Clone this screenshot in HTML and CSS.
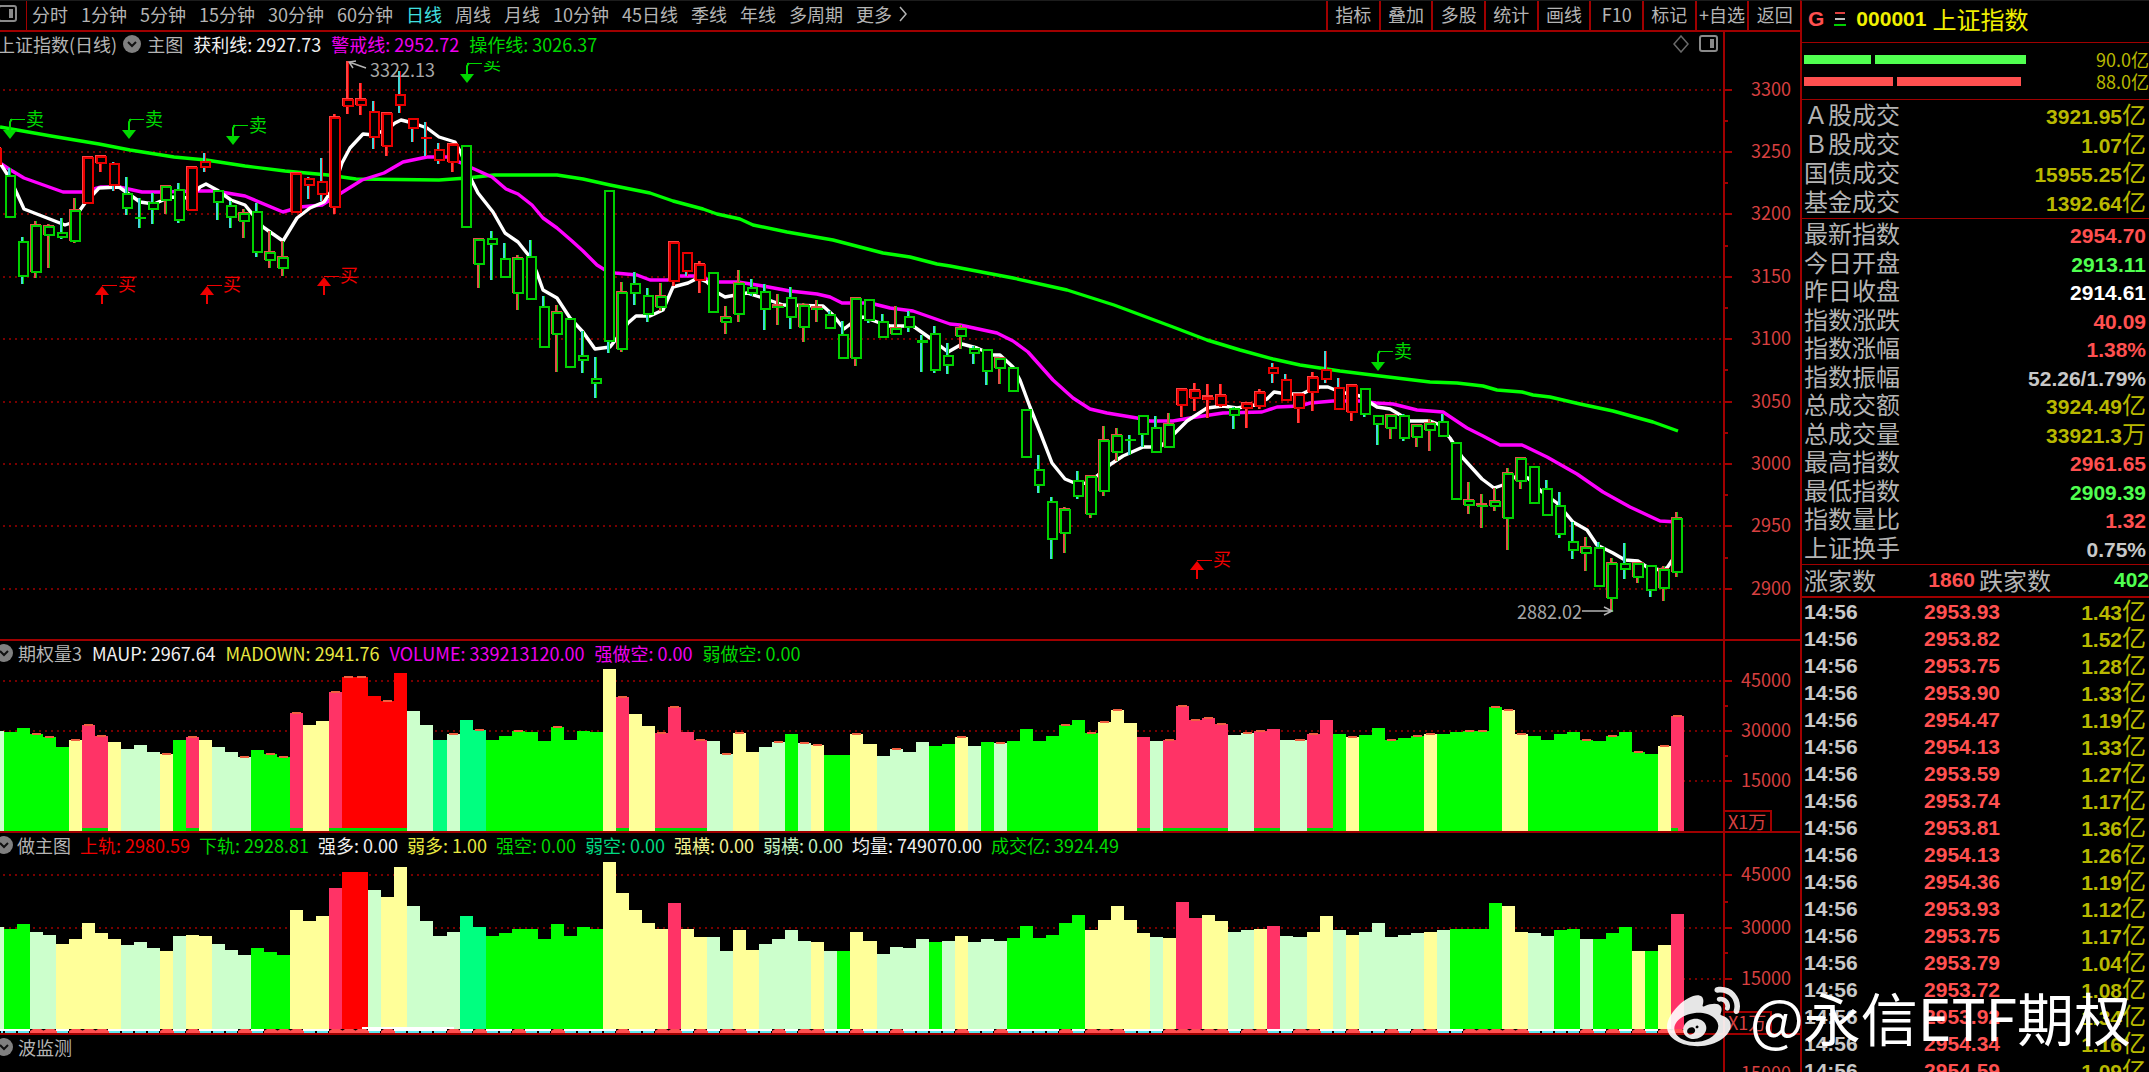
FILE: index.html
```html
<!DOCTYPE html>
<html lang="zh-CN">
<head>
<meta charset="utf-8">
<title>上证指数</title>
<link rel="stylesheet" href="styles.css">
</head>
<body>
<svg class="defs" aria-hidden="true">
  <symbol id="chevron" viewBox="0 0 18 18"><circle cx="9" cy="9" r="9" fill="#808080"/><path d="M5 7l4 4 4-4" fill="none" stroke="#111" stroke-width="2"/></symbol>
  <symbol id="split" viewBox="0 0 20 18"><rect x="1" y="1" width="17" height="15" rx="2" fill="none" stroke="#8a8a8a" stroke-width="2"/><rect x="11" y="4" width="4" height="9" fill="#8a8a8a"/></symbol>
</svg>
<div class="app">
  <main class="charts">
    <header class="toolbar">
      <button class="side-toggle" aria-label="侧栏"><svg class="ico-split"><use href="#split"/></svg></button>
      <nav class="periods">
        <button>分时</button><button>1分钟</button><button>5分钟</button><button>15分钟</button><button>30分钟</button><button>60分钟</button><button class="on">日线</button><button>周线</button><button>月线</button><button>10分钟</button><button>45日线</button><button>季线</button><button>年线</button><button>多周期</button><button class="more">更多<svg width="10" height="16" viewBox="0 0 10 16"><path d="M2 1l6 7-6 7" fill="none" stroke="#b4b4b4" stroke-width="1.5"/></svg></button>
      </nav>
      <nav class="tools">
        <button>指标</button><button>叠加</button><button>多股</button><button>统计</button><button>画线</button><button>F10</button><button>标记</button><button>+自选</button><button>返回</button>
      </nav>
    </header>

    <section class="panel">
      <div class="head">
        <div class="legend main">
          <span>上证指数(日线)</span><svg class="chev"><use href="#chevron"/></svg><span>主图</span>
          <span class="c-white">获利线: 2927.73</span><span class="c-mag">警戒线: 2952.72</span><span class="c-green">操作线: 3026.37</span>
          <span class="corner"><svg width="18" height="18" viewBox="0 0 18 18"><path d="M9 1l7 8-7 8-7-8z" fill="none" stroke="#6a6a6a" stroke-width="1.5"/></svg><svg class="ico-split"><use href="#split"/></svg></span>
        </div>
        <div class="gutter"></div>
      </div>
      <svg class="plot" id="price" viewBox="0 58 1800 581"></svg>
    </section>

    <section class="panel">
      <div class="head">
        <div class="legend">
          <svg class="chev cut"><use href="#chevron"/></svg><span>期权量3</span><span class="c-white">MAUP: 2967.64</span><span class="c-yel">MADOWN: 2941.76</span><span class="c-mag">VOLUME: 339213120.00</span><span class="c-mag">强做空: 0.00</span><span class="c-green">弱做空: 0.00</span>
        </div>
        <div class="gutter"></div>
      </div>
      <svg class="plot" id="vol" viewBox="0 667 1800 164"></svg>
    </section>

    <section class="panel">
      <div class="head">
        <div class="legend dense">
          <svg class="chev cut"><use href="#chevron"/></svg><span>做主图</span><span class="c-red">上轨: 2980.59</span><span class="c-green">下轨: 2928.81</span><span class="c-white">强多: 0.00</span><span class="c-yel">弱多: 1.00</span><span class="c-green">强空: 0.00</span><span class="c-teal">弱空: 0.00</span><span class="c-cream">强横: 0.00</span><span class="c-mint">弱横: 0.00</span><span class="c-white">均量: 749070.00</span><span class="c-green">成交亿: 3924.49</span>
        </div>
        <div class="gutter"></div>
      </div>
      <svg class="plot" id="trend" viewBox="0 859 1800 174"></svg>
    </section>

    <section class="panel last">
      <div class="head">
        <div class="legend"><svg class="chev cut"><use href="#chevron"/></svg><span>波监测</span></div>
        <div class="gutter"></div>
      </div>
      <svg class="plot" id="wave" viewBox="0 1061 1800 40"></svg>
    </section>
  </main>

  <aside class="quote">
    <h1 class="name"><b class="g">G</b><svg width="12" height="16" viewBox="0 0 12 16"><path d="M1 2h10" stroke="#e04040" stroke-width="2"/><path d="M1 8h10" stroke="#c0c0c0" stroke-width="2"/><path d="M0 14h12" stroke="#00d000" stroke-width="2"/></svg><b>000001</b><span>上证指数</span></h1>
    <div class="depth">
      <div class="bar up"><i></i><i></i></div><span>90.0亿</span>
      <div class="bar down"><i></i><i></i></div><span>88.0亿</span>
    </div>
    <table class="stats turnover">
      <tr><th>Ａ股成交</th><td class="y"><b>3921.95</b>亿</td></tr>
      <tr><th>Ｂ股成交</th><td class="y"><b>1.07</b>亿</td></tr>
      <tr><th>国债成交</th><td class="y"><b>15955.25</b>亿</td></tr>
      <tr><th>基金成交</th><td class="y"><b>1392.64</b>亿</td></tr>
    </table>
    <table class="stats detail">
      <tr><th>最新指数</th><td class="r"><b>2954.70</b></td></tr>
      <tr><th>今日开盘</th><td class="g"><b>2913.11</b></td></tr>
      <tr><th>昨日收盘</th><td class="w"><b>2914.61</b></td></tr>
      <tr><th>指数涨跌</th><td class="r"><b>40.09</b></td></tr>
      <tr><th>指数涨幅</th><td class="r"><b>1.38%</b></td></tr>
      <tr><th>指数振幅</th><td><b>52.26/1.79%</b></td></tr>
      <tr><th>总成交额</th><td class="y"><b>3924.49</b>亿</td></tr>
      <tr><th>总成交量</th><td class="y"><b>33921.3</b>万</td></tr>
      <tr><th>最高指数</th><td class="r"><b>2961.65</b></td></tr>
      <tr><th>最低指数</th><td class="g"><b>2909.39</b></td></tr>
      <tr><th>指数量比</th><td class="r"><b>1.32</b></td></tr>
      <tr><th>上证换手</th><td><b>0.75%</b></td></tr>
    </table>
    <div class="breadth"><span>涨家数</span><b class="r">1860</b><span>跌家数</span><b class="g">402</b></div>
    <div class="ticks"><table>
      <tr><td>14:56</td><td>2953.93</td><td>1.43<span>亿</span></td></tr>
      <tr><td>14:56</td><td>2953.82</td><td>1.52<span>亿</span></td></tr>
      <tr><td>14:56</td><td>2953.75</td><td>1.28<span>亿</span></td></tr>
      <tr><td>14:56</td><td>2953.90</td><td>1.33<span>亿</span></td></tr>
      <tr><td>14:56</td><td>2954.47</td><td>1.19<span>亿</span></td></tr>
      <tr><td>14:56</td><td>2954.13</td><td>1.33<span>亿</span></td></tr>
      <tr><td>14:56</td><td>2953.59</td><td>1.27<span>亿</span></td></tr>
      <tr><td>14:56</td><td>2953.74</td><td>1.17<span>亿</span></td></tr>
      <tr><td>14:56</td><td>2953.81</td><td>1.36<span>亿</span></td></tr>
      <tr><td>14:56</td><td>2954.13</td><td>1.26<span>亿</span></td></tr>
      <tr><td>14:56</td><td>2954.36</td><td>1.19<span>亿</span></td></tr>
      <tr><td>14:56</td><td>2953.93</td><td>1.12<span>亿</span></td></tr>
      <tr><td>14:56</td><td>2953.75</td><td>1.17<span>亿</span></td></tr>
      <tr><td>14:56</td><td>2953.79</td><td>1.04<span>亿</span></td></tr>
      <tr><td>14:56</td><td>2953.72</td><td>1.08<span>亿</span></td></tr>
      <tr><td>14:56</td><td>2953.92</td><td>1.34<span>亿</span></td></tr>
      <tr><td>14:56</td><td>2954.34</td><td>1.16<span>亿</span></td></tr>
      <tr><td>14:56</td><td>2954.59</td><td>1.09<span>亿</span></td></tr>
    </table></div>
  </aside>

  <div class="watermark">
    <svg viewBox="0 0 24 24" width="73" height="73"><path fill="#fff" fill-opacity=".9" d="M10.098 20.323c-3.977.391-7.414-1.406-7.672-4.02-.259-2.609 2.759-5.047 6.74-5.441 3.979-.394 7.413 1.404 7.671 4.018.259 2.6-2.759 5.049-6.737 5.439l-.002.004zM9.05 17.219c-.384.616-1.208.884-1.829.602-.612-.279-.793-.991-.406-1.593.379-.595 1.176-.861 1.793-.601.622.263.82.972.442 1.592zm1.27-1.627c-.141.237-.449.353-.689.253-.236-.09-.313-.361-.177-.586.138-.227.436-.346.672-.24.239.09.315.36.18.601l.014-.028zm.176-2.719c-1.893-.493-4.033.45-4.857 2.118-.836 1.704-.026 3.591 1.886 4.21 1.983.64 4.318-.341 5.132-2.179.8-1.793-.201-3.642-2.161-4.149zm7.563-1.224c-.346-.105-.57-.18-.405-.615.375-.977.42-1.804 0-2.404-.781-1.112-2.915-1.053-5.364-.03 0 0-.766.331-.571-.271.376-1.217.315-2.224-.27-2.809-1.338-1.337-4.869.045-7.888 3.08C1.309 10.87 0 13.273 0 15.348c0 3.981 5.099 6.395 10.086 6.395 6.536 0 10.888-3.801 10.888-6.82 0-1.822-1.547-2.854-2.915-3.284v.01zm1.908-5.092c-.766-.856-1.908-1.187-2.96-.962-.436.09-.706.511-.616.932.09.42.511.691.932.602.511-.105 1.067.044 1.442.465.376.421.466.977.316 1.473-.136.406.089.856.51.992.405.119.857-.105.992-.512.33-1.021.12-2.178-.646-3.035l.03.045zm2.418-2.195c-1.576-1.757-3.905-2.419-6.054-1.968-.496.104-.812.587-.706 1.081.104.496.586.813 1.082.707 1.532-.331 3.185.15 4.296 1.383 1.112 1.246 1.429 2.943.947 4.416-.165.48.106 1.007.586 1.157.479.165.991-.104 1.157-.586.675-2.088.241-4.478-1.338-6.235l.03.045z"/></svg>
    <span>@永信ETF期权</span>
  </div>
</div>
<script src="chart.js"></script>
</body>
</html>
```

FILE: styles.css
```css
* { box-sizing: border-box; }
body {
  margin: 0;
  background: #000;
  color: #b4b4b4;
  font: 400 18px/24px "Noto Sans CJK SC", sans-serif;
  overflow: hidden;
}
.defs { position: absolute; width: 0; height: 0; }
.app {
  position: relative;
  display: grid;
  grid-template-columns: minmax(0, 1fr) 349px;
  height: 100vh;
  overflow: hidden;
}
button {
  margin: 0;
  padding: 0 0 3px;
  border: 0;
  background: none;
  color: #b4b4b4;
  font: inherit;
  white-space: nowrap;
  cursor: pointer;
}

/* toolbar */
.charts { min-width: 0; overflow: hidden; }
.toolbar {
  display: flex;
  height: 32px;
  border-top: 1px solid #1c1c1c;
  border-bottom: 2px solid #a00000;
}
.side-toggle {
  display: flex;
  flex: none;
  align-items: center;
  justify-content: flex-end;
  width: 27px;
  padding-right: 8px;
  border-right: 1px solid #a00000;
}
.ico-split { width: 20px; height: 18px; flex: none; }
.periods { display: flex; gap: 13px; padding-left: 5px; }
.periods .on { color: #40e0e0; }
.more { display: flex; align-items: center; gap: 6px; }
.tools {
  display: grid;
  grid-template-columns: repeat(9, 1fr);
  width: 474px;
  margin-left: auto;
}
.tools button { border-left: 2px solid #a00000; }

/* chart panels */
.panel { border-bottom: 2px solid #a00000; }
.panel.last { border-bottom: 0; }
.head { display: grid; grid-template-columns: 1723fr 77fr; height: 26px; }
.gutter { border-left: 2px solid #a00000; }
.legend {
  display: flex;
  align-items: center;
  gap: 10px;
  padding-bottom: 2px;
  overflow: hidden;
  white-space: nowrap;
}
.legend.dense { gap: 9px; }
.legend.main > span:first-child { margin-left: -3px; }
.legend.main .chev { margin: 0 -4px; }
.chev { width: 18px; height: 18px; flex: none; }
.chev.cut { margin-left: -5px; margin-right: -5px; }
.corner { display: flex; gap: 9px; margin-left: auto; padding-right: 4px; }
.plot { display: block; width: 100%; height: auto; }
.plot text { font: 400 18px "Noto Sans CJK SC", sans-serif; }
.c-white { color: #f0f0f0; }
.c-mag { color: #f000f0; }
.c-green { color: #00d800; }
.c-yel { color: #e8e840; }
.c-red { color: #f00000; }
.c-teal { color: #00d880; }
.c-cream { color: #f0f090; }
.c-mint { color: #c0f0c0; }

/* quote column */
.quote {
  border-left: 2px solid #a00000;
  border-top: 1px solid #1c1c1c;
  overflow: hidden;
  font-size: 24px;
}
.quote b, .ticks td { font: bold 21px/20px "Liberation Sans", sans-serif; }
.quote .r { color: #ff5050; }
.quote .g { color: #50ff50; }
.quote .w { color: #fff; }
.quote .y { color: #b8b800; }
.quote .name {
  display: flex;
  align-items: center;
  height: 42px;
  margin: 0;
  padding: 0 0 5px 6px;
  gap: 10px;
  border-bottom: 1px solid #a00000;
  color: #f0f000;
  font-size: 24px;
  font-weight: 400;
}
.name span { margin-left: -4px; }
.quote .name .g { color: #ff5050; }
.depth {
  display: grid;
  grid-template-columns: 222px 1fr;
  align-content: center;
  height: 57px;
  padding: 0 0 2px 2px;
  border-bottom: 1px solid #a00000;
  color: #b8b800;
  font-size: 18px;
  line-height: 22px;
}
.depth span { text-align: right; }
.bar { display: grid; gap: 4px; align-items: center; }
.bar i { height: 9px; }
.bar.up { grid-template-columns: 30% 68%; }
.bar.down { grid-template-columns: 40% 56%; }
.up i { background: #50ff50; }
.down i { background: #ff5050; }
.stats {
  width: 100%;
  padding: 0 0 3px 2px;
  border-collapse: separate;
  border-spacing: 0;
  border-bottom: 1px solid #a00000;
  color: #c8c8c8;
  line-height: 26px;
}
.stats th { padding: 0; font-weight: 400; text-align: left; color: #b4b4b4; }
.stats td { padding: 0 3px 0 0; text-align: right; }
.turnover { height: 119px; }
.detail { height: 346px; }
.breadth {
  display: grid;
  grid-template-columns: 72px 95px 78px 1fr;
  align-items: center;
  column-gap: 4px;
  height: 33px;
  padding: 0 0 2px 2px;
  border-bottom: 2px solid #a00000;
}
.breadth b { text-align: right; }
.ticks table { width: 100%; border-spacing: 0; padding-left: 2px; }
.ticks tr { height: 27px; }
.ticks td { padding: 0; color: #c8c8c8; text-align: right; }
.ticks td:first-child { width: 60px; text-align: left; }
.ticks td:nth-child(2) { width: 136px; color: #ff5050; }
.ticks td:last-child { padding-right: 3px; color: #b8b800; }
.ticks span { font: 400 24px/20px "Noto Sans CJK SC", sans-serif; }

.watermark {
  position: absolute;
  right: 18px;
  bottom: 19px;
  display: flex;
  align-items: center;
  gap: 10px;
  color: #fff;
  font-size: 57px;
  line-height: 73px;
  pointer-events: none;
}
```

FILE: chart.js
```js
// One row per bar: body colour, direction, high, body top, body bottom, low.
const candles = `r u 149 149 164 164
g d 168 176 217 217
g d 237 242 276 284
g u 221 226 272 278
g u 224 227 235 268
g d 218 233 237 239
g u 198 211 241 243
r u 157 158 203 203
r u 155 157 163 172
r d 162 164 185 191
g d 177 194 208 215
g d 198 217 218 228
g d 193 203 209 224
g u 186 187 200 214
g d 183 190 220 223
r u 167 168 210 210
r d 153 162 167 172
g d 191 191 202 220
g d 201 206 217 228
g u 209 214 221 238
g d 203 212 252 257
g u 231 253 260 268
g u 241 258 268 276
r u 173 174 212 212
r d 177 179 185 199
r d 158 182 194 201
r u 114 118 207 214
r u 61 100 106 114
r u 83 100 105 115
r d 101 112 137 149
r u 113 114 146 156
r d 71 95 105 113
r d 118 119 128 142
r d 122 137 138 156
r d 143 150 160 164
r u 143 145 162 172
g d 146 146 227 227
g u 238 240 264 288
g d 231 239 244 280
g d 243 259 277 277
g u 255 259 293 310
g d 240 257 299 299
g d 296 307 347 347
g u 305 313 334 372
g d 319 319 367 367
g d 331 356 360 373
g d 357 379 383 398
g d 191 191 341 353
g u 282 293 349 352
g d 272 284 293 305
g d 288 296 314 322
g u 283 297 307 311
r u 242 243 281 286
r d 253 253 271 276
r u 261 265 280 293
g d 273 273 312 313
g u 306 318 322 334
g u 270 284 314 322
g d 279 288 293 296
g d 284 292 309 330
g u 294 306 308 325
g d 287 298 317 329
g u 303 306 327 342
g u 300 308 310 322
g d 311 315 328 329
g d 321 335 358 358
g u 298 299 358 366
g d 300 300 320 323
g d 314 322 337 337
g u 306 329 334 334
g d 311 317 327 332
g d 335 340 343 372
g d 326 334 370 373
g d 343 356 365 374
g u 325 329 336 349
g d 346 349 353 364
g d 350 350 371 385
g u 357 359 368 384
g d 368 368 391 392
g d 410 410 457 458
g d 455 470 485 493
g d 497 502 539 559
g u 507 510 533 553
g d 471 481 496 499
g u 476 477 514 518
g u 426 441 491 496
g u 428 436 452 461
g d 435 439 440 455
g d 416 416 434 447
g d 416 428 452 452
g u 413 425 447 447
r u 389 390 405 417
r u 383 391 398 411
r u 384 397 400 418
r u 384 396 405 407
g d 407 409 415 429
r u 402 404 408 428
r u 389 393 406 409
r d 363 368 373 383
r d 374 380 400 400
r u 394 395 408 423
r u 372 378 392 411
r d 351 370 379 383
r d 378 388 409 409
r u 384 386 412 421
g d 389 389 414 417
g d 416 416 424 445
g u 415 416 428 439
g d 414 416 438 441
g u 424 426 437 447
g u 419 424 430 451
g d 414 422 436 436
g d 443 443 499 499
g u 482 501 505 514
g u 494 505 506 528
g u 488 502 506 511
g u 468 474 518 550
g u 458 459 481 489
g d 467 467 503 503
g d 480 489 515 515
g d 492 506 534 538
g d 522 542 550 559
g u 537 548 553 571
g d 542 548 586 586
g u 558 564 598 612
g d 543 564 569 579
g u 563 564 577 583
g d 566 566 590 597
g u 566 570 588 601
g u 512 519 572 577`.split("\n").map(r => r.split(" "));

// Bar tops, in thirds of a unit below y=620, each with its colour key; "u" marks a capped bar.
const volume = "332L 336G 323G 343Gu 352Gu 381G 361Yu 316Pu 347Pu 367Y 386L 376L 395L 401Yu 359G 352Pu 359Y 381L 395L 410Lu 390G 401Gu 410Gu 279Pu 314Y 304Y 216Pu 171Ru 171Ru 228R 243Ru 160R 273L 314L 359T 343Lu 300T 329Tu 359G 349G 334Gu 336G 363G 320Gu 359G 332G 336G 147Y 230Pu 282Y 318Y 338Pu 262Pu 336P 361Pu 363L 402Lu 338Yu 395Y 381L 366Lu 341G 370Lu 375Yu 404G 404G 343Yu 372Y 409L 387Lu 395L 367L 377G 373G 352Yu 377L 367G 370Lu 363G 327G 363G 349G 316Gu 300G 338Gu 307Yu 270Yu 309Y 350P 363L 361Pu 257Pu 301Pu 293Pu 311Pu 345L 338Lu 333Pu 328P 359L 361Lu 343Pu 300P 341G 351Yu 346G 323G 361Gu 354G 348Gu 343Yu 341G 336G 333Gu 333Gu 261Gu 270Yu 343Yu 349G 359G 341G 336G 361Gu 363G 347Gu 336G 397Gu 403G 378Yu 288Pu".split(" ");
const trend = "922L 926G 912G 935L 944L 971Y 958Y 908Y 940Y 958Y 975L 966L 984L 993Y 948L 944Y 948Y 971L 989L 1006L 984G 997G 1006G 871Y 904Y 889Y 804P 755R 755R 809L 831Y 741Y 858L 904L 948L 935L 889T 922T 948G 940G 926G 926G 958G 912G 948G 921G 926G 727Y 818Y 871Y 908Y 926Y 850P 926Y 952Y 952L 993L 930Y 989Y 971L 958L 930L 962L 966Y 993L 993G 935Y 962Y 1002L 980L 984L 958L 966G 962L 948Y 966L 958L 962L 953G 917G 953G 944G 908G 885G 930Y 899Y 858Y 899Y 940Y 952L 953Y 845P 894P 885Y 904Y 935L 930L 926Y 917P 948L 952L 935Y 889Y 930L 944Y 935L 908L 952L 944L 940L 935Y 930L 926G 926G 926G 850G 858Y 935Y 940L 948L 930G 926G 958L 958G 940G 922G 993Y 993G 975Y 881P".split(" ");

const lines = {
  "#00ff00": "0,127 17,130 51,136 99,144 130,150 174,157 206,160 245,166 285,171 328,175 356,179 439,180 467,178 494,175 557,175 583,179 610,185 650,193 673,201 703,209 717,214 740,219 753,225 787,232 833,240 883,253 910,257 937,264 950,266 1013,278 1067,290 1114,305 1173,327 1207,340 1240,350 1273,359 1300,365 1340,371 1380,376 1430,382 1457,383 1483,386 1497,390 1522,392 1533,395 1550,397 1580,404 1613,411 1653,422 1678,431",
  "#ff00ff": "0,163 9,169 24,178 63,192 83,192 101,187 119,187 142,192 162,192 198,191 215,191 245,196 283,212 300,207 322,205 330,200 362,180 384,173 403,162 427,157 447,157 459,162 472,168 492,177 506,189 518,194 532,205 543,218 557,228 572,241 583,251 597,265 605,270 615,273 637,275 650,280 668,280 680,276 695,276 717,282 738,282 763,286 790,291 817,294 830,297 842,303 870,303 890,308 913,311 950,324 960,325 997,333 1013,341 1028,352 1053,380 1073,398 1090,409 1107,413 1137,418 1150,421 1173,421 1190,418 1223,413 1262,412 1277,407 1300,406 1310,403 1333,401 1360,401 1376,403 1393,404 1417,410 1443,412 1467,428 1483,436 1500,445 1522,445 1547,457 1577,474 1603,492 1630,507 1660,521 1677,522",
  "#ffffff": "0,163 7,174 14,187 24,209 65,225 71,223 85,203 99,188 119,187 140,202 154,204 170,197 190,198 200,187 206,184 217,190 231,200 245,205 263,227 283,241 297,218 310,208 324,202 334,187 342,163 350,148 363,134 374,135 389,128 395,123 401,120 413,123 427,128 439,137 455,142 461,153 471,179 478,193 493,212 505,233 518,242 530,257 537,273 543,290 557,298 570,318 583,332 595,349 610,347 617,338 628,323 636,316 650,316 663,310 673,287 688,283 698,278 707,282 718,293 725,297 747,293 763,298 783,305 823,306 833,315 844,329 853,322 863,317 880,323 890,326 913,326 930,338 948,352 962,344 977,348 993,355 1000,355 1013,367 1020,380 1030,407 1040,432 1052,463 1065,479 1077,484 1087,483 1098,475 1111,464 1123,456 1143,447 1160,447 1175,433 1187,421 1207,408 1223,406 1237,408 1255,405 1267,399 1274,392 1287,394 1302,394 1310,390 1320,387 1328,387 1340,392 1360,396 1377,407 1390,409 1397,413 1410,421 1430,421 1438,424 1450,438 1462,457 1482,479 1494,488 1503,485 1515,477 1528,478 1542,492 1557,503 1573,522 1587,530 1597,545 1613,553 1625,560 1638,561 1647,567 1660,570 1667,568 1675,556"
};

const RED = "#a00000", AXIS = 1724;
const fills = { L: "#ccffcc", G: "#00ff00", Y: "#ffff99", P: "#ff3366", R: "#ff0000", T: "#00ff80" };
const centre = i => 9.5 + 13.03 * (i - 1);
const edge = i => Math.round(centre(i) - 6);
const rect = (x, y, w, h, fill, extra = "") =>
  `<rect x="${x}" y="${y}" width="${w}" height="${h}" fill="${fill}" ${extra}/>`;
const label = (x, y, s, fill, anchor = "start") =>
  `<text x="${x}" y="${y}" fill="${fill}" text-anchor="${anchor}">${s}</text>`;

function axis(top, bottom, marks, minor) {
  let s = rect(AXIS - 1, top, 2, bottom - top, RED);
  marks.forEach(([y, t]) => {
    s += `<line x1="3" x2="${AXIS}" y1="${y}" y2="${y}" stroke="#780000" stroke-width="2" stroke-dasharray="2 4"/>`;
    s += rect(AXIS, y - 1, 8, 2, RED) + label(1791, y + 6, t, "#d84040", "end");
  });
  minor.forEach(y => { s += rect(AXIS, y - 1, 4, 2, RED); });
  return s;
}

function candle([c, dir, hi, top, bot, lo], i) {
  [hi, top, bot, lo] = [hi, top, bot, lo].map(Number);
  const x = Math.round(centre(i)), up = dir === "u", red = c === "r";
  const main = red ? "#e80000" : "#00d000";
  const side = up ? (red ? "#ff4040" : "#e05048") : "#40d8d8";
  let s = rect(x - 2, hi, 2, lo - hi, side) + rect(x, hi, 1, lo - hi, main);
  if (up) s += rect(x - 6, top - 2, 11, bot - top + 2, side);
  const h = Math.max(bot - top, 2);
  s += h < 4 ? rect(x - 5, top, 11, h, main)
    : `<rect x="${x - 4}" y="${top}" width="9" height="${h}" fill="#000" stroke="${main}" stroke-width="2"/>`;
  return s;
}

function sell(x, y) {
  return `<path d="M${x} ${y - 8}V${y - 17}l2 -3" fill="none" stroke="#00d800" stroke-width="2"/><path d="M${x - 7} ${y - 9}h14l-7 9z" fill="#00d800"/>`
    + rect(x, y - 20, 15, 1, "#00d800") + label(x + 16, y - 13, "卖", "#00d800");
}
function buy(x, y) {
  return rect(x - 1, y + 8, 2, 10, "#f00000") + `<path d="M${x - 7} ${y + 9}h14l-7 -9z" fill="#f00000"/>`
    + rect(x, y - 1, 15, 1, "#f00000") + label(x + 16, y + 5, "买", "#f00000");
}

function bars(data, base, caps) {
  return data.map((d, i) => {
    const [, v, c, u] = d.match(/(\d+)(\w)(u?)/);
    const y = Math.round(620 + v / 3), x = i ? edge(i) : 0, w = edge(i + 1) - x;
    let s = rect(x, y, w, base - y, fills[c]);
    if (caps && u) s += rect(x + 2, y - 1, w - 4, 2, "#f06040");
    if (caps && (c === "P" || c === "R")) s += rect(x, base - 3, i === 129 ? w / 2 : w, 3, "#00d800");
    return s;
  }).join("");
}

const crisp = s => `<g shape-rendering="crispEdges">${s}</g>`;
const unit = y => `<path d="M${AXIS} ${y}h47v22" fill="none" stroke="${RED}" stroke-width="2"/>` + label(1728, y + 18, "X1万", "#d84040");
const draw = (id, s) => { document.getElementById(id).innerHTML = s; };

const levels = [3300, 3250, 3200, 3150, 3100, 3050, 3000, 2950, 2900];
const priceMarks = levels.map((t, i) => [Math.round(89.5 + 62.4 * i), t]);
const priceMinor = levels.slice(1).map((t, i) => Math.round(120.7 + 62.4 * i));

draw("price",
  `<clipPath id="area"><rect x="0" y="61" width="1722" height="578"/></clipPath>`
  + crisp(axis(58, 639, priceMarks, priceMinor))
  + `<g clip-path="url(#area)">`
  + Object.entries(lines).map(([c, p]) => `<polyline points="${p}" fill="none" stroke="${c}" stroke-width="3.4" stroke-linejoin="round"/>`).join("")
  + crisp(candles.map(candle).join(""))
  + [[10, 139], [129, 139], [233, 145], [467, 83], [1378, 371]].map(p => sell(...p)).join("")
  + [[102, 286], [207, 286], [324, 277], [1197, 561]].map(p => buy(...p)).join("")
  + `</g>`
  + `<path d="M366 68L349 62M356 61l-7 1 4 6M1582 611h29M1604 607l8 4-8 4" fill="none" stroke="#b4b4b4" stroke-width="1.5"/>`
  + label(370, 77, "3322.13", "#a8a8a8") + label(1517, 619, "2882.02", "#a8a8a8"));

draw("vol", crisp(axis(667, 831, [[681, 45000], [731, 30000], [781, 15000]], [706, 756]) + bars(volume, 831, true)) + unit(811));

const strip = volume.map((d, i) => {
  const x = i ? edge(i) : 0, w = edge(i + 1) - x;
  return d.endsWith("u")
    ? `<path d="M${x} 1033v-2l3 -2h${w - 5}l3 2v2z" fill="#ff5050"/>`
    : rect(x, 1029, w, 2, "#fff") + rect(x + 1, 1031, w - 2, 2, "#60e8f0");
}).join("");
draw("trend", crisp(axis(859, 1033, [[875, 45000], [928, 30000], [979, 15000]], [902, 953]) + bars(trend, 1029, false))
  + strip + rect(362, 1027, 92, 2, "#fff") + unit(1012));

draw("wave", rect(AXIS - 1, 1061, 2, 40, RED) + label(1791, 1080, "15000", "#d84040", "end"));
```
